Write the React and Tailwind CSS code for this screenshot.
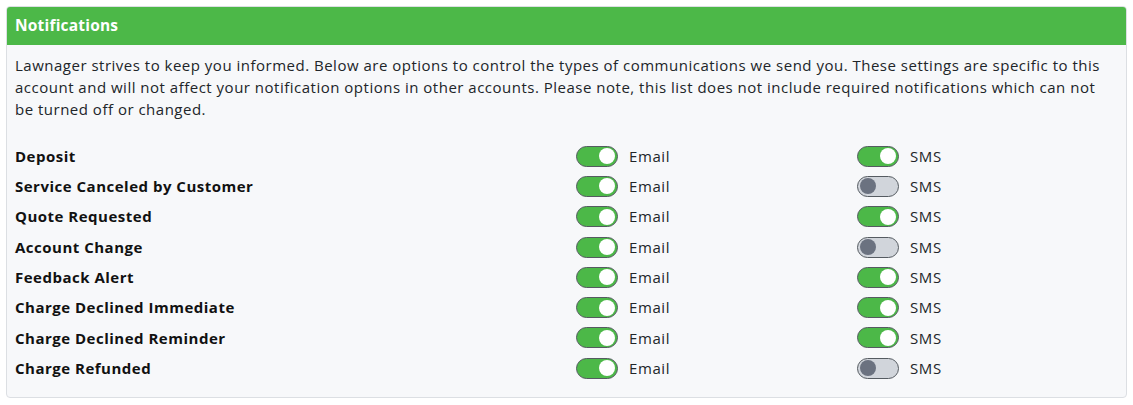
import React, { useState } from "react";

const rows = [
  { name: "Deposit", email: true, sms: true },
  { name: "Service Canceled by Customer", email: true, sms: false },
  { name: "Quote Requested", email: true, sms: true },
  { name: "Account Change", email: true, sms: false },
  { name: "Feedback Alert", email: true, sms: true },
  { name: "Charge Declined Immediate", email: true, sms: true },
  { name: "Charge Declined Reminder", email: true, sms: true },
  { name: "Charge Refunded", email: true, sms: false },
];

const Toggle = ({ on, onChange }) => (
  <button
    onClick={onChange}
    className={`relative w-[42px] h-[21px] rounded-full border border-[#555b61] ${
      on ? "bg-[#4cb848]" : "bg-[#d1d5db]"
    }`}
  >
    <span
      className={`absolute top-[1.5px] w-[16px] h-[16px] rounded-full ${
        on ? "left-[22px] bg-white" : "left-[2px] bg-[#6b7280]"
      }`}
    />
  </button>
);

const App = () => {
  const [prefs, setPrefs] = useState(rows);

  const flip = (index, key) => {
    const updated = [...prefs];
    updated[index] = { ...updated[index], [key]: !updated[index][key] };
    setPrefs(updated);
  };

  return (
    <div
      className="p-[6px] bg-white text-[#212529]"
      style={{ fontFamily: "'Open Sans', sans-serif" }}
    >
      <div className="w-[1121px] rounded-[4px] border border-[#dcdfe3] bg-[#f7f8fa] overflow-hidden">
        <div className="h-[38px] bg-[#4cb848] flex items-center px-[8px] text-white font-bold text-[15.5px] tracking-[0.2px]">
          Notifications
        </div>

        <div className="px-[8px] pt-[9px] pb-[14px]">
          <p className="text-[15px] leading-[22px] tracking-[0.5px] w-[1102px]">
            Lawnager strives to keep you informed. Below are options to control the types of
            communications we send you. These settings are specific to this account and will not
            affect your notification options in other accounts. Please note, this list does not
            include required notifications which can not be turned off or changed.
          </p>

          {/* Notification rows */}
          <div className="mt-[21px]">
            {prefs.map((row, index) => (
              <div
                key={row.name}
                className="grid grid-cols-[561px_281px_1fr] items-center h-[30.3px] text-[15px]"
              >
                <span className="font-bold text-[#111] tracking-[0.5px]">{row.name}</span>
                <label className="flex items-center gap-[11px]">
                  <Toggle on={row.email} onChange={() => flip(index, "email")} />
                  <span className="tracking-[0.6px]">Email</span>
                </label>
                <label className="flex items-center gap-[11px]">
                  <Toggle on={row.sms} onChange={() => flip(index, "sms")} />
                  <span className="tracking-[0.6px]">SMS</span>
                </label>
              </div>
            ))}
          </div>
        </div>
      </div>
    </div>
  );
};

export default App;
